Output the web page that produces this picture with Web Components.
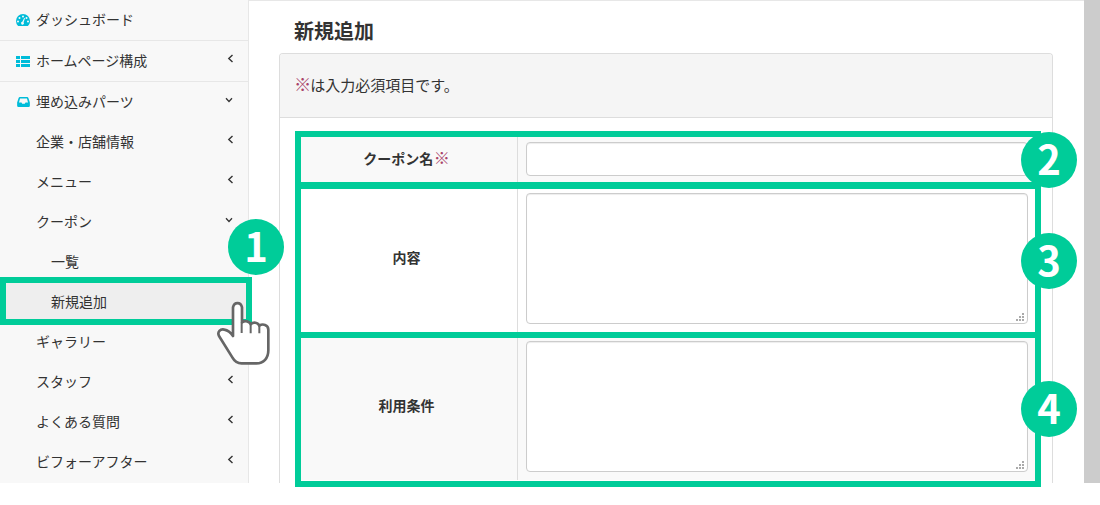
<!DOCTYPE html>
<html lang="ja">
<head>
<meta charset="utf-8">
<title>新規追加</title>
<style>
  html, body { margin: 0; background: #fff; }
  body { font: 14px "Noto Sans CJK JP", "Liberation Sans", sans-serif; color: #333; height: 505px; }
</style>
</head>
<body>
<app-page>
  <side-nav slot="side">
    <nav-item icon="gauge" line>ダッシュボード</nav-item>
    <nav-item icon="list" arrow="left" line>ホームページ構成</nav-item>
    <nav-item icon="inbox" arrow="down">埋め込みパーツ</nav-item>
    <nav-item level="1" arrow="left">企業・店舗情報</nav-item>
    <nav-item level="1" arrow="left">メニュー</nav-item>
    <nav-item level="1" arrow="down">クーポン</nav-item>
    <nav-item level="2">一覧</nav-item>
    <nav-item level="2" active>新規追加</nav-item>
    <nav-item level="1">ギャラリー</nav-item>
    <nav-item level="1" arrow="left">スタッフ</nav-item>
    <nav-item level="1" arrow="left">よくある質問</nav-item>
    <nav-item level="1" arrow="left">ビフォーアフター</nav-item>
  </side-nav>
  <form-panel heading="新規追加">
    <span slot="note"><req-mark></req-mark>は入力必須項目です。</span>
    <form-row striped>
      <span slot="label">クーポン名<req-mark tight></req-mark></span>
      <input-box></input-box>
    </form-row>
    <form-row>
      <span slot="label">内容</span>
      <area-box></area-box>
    </form-row>
    <form-row striped>
      <span slot="label">利用条件</span>
      <area-box></area-box>
    </form-row>
  </form-panel>
  <guide-layer slot="over"></guide-layer>
</app-page>

<script>
// page frame: sidebar, main column, grey scroll track
class AppPage extends HTMLElement {
  constructor(){
    super();
    this.attachShadow({mode:'open'}).innerHTML = `
      <style>
        :host{ display:flex; position:relative; height:483px; }
        .main{ flex:1; min-width:0; overflow:hidden; border-top:1px solid #e7e7e7; padding:0 31px 0 30px; box-sizing:border-box; }
        .track{ width:16px; background:#ccc; }
      </style>
      <slot name="side"></slot>
      <div class="main"><slot></slot></div>
      <div class="track"></div>
      <slot name="over"></slot>`;
  }
}

class SideNav extends HTMLElement {
  constructor(){
    super();
    this.attachShadow({mode:'open'}).innerHTML = `
      <style>
        :host{ display:block; width:249px; box-sizing:border-box; overflow:hidden; background:#f8f8f8; border-right:1px solid #e7e7e7; flex:none; }
      </style>
      <slot></slot>`;
  }
}

const navIcons = {
  gauge: `<svg width="14" height="12" viewBox="0 0 14 12"><path fill="#00bcd9" fill-rule="evenodd" d="M7 0a7 7 0 0 1 7 7c0 1.900-.7 3.600-1.900 4.700a1 1 0 0 1-.7.3H2.600a1 1 0 0 1-.7-.3A6.900 6.900 0 0 1 0 7a7 7 0 0 1 7-7zM7 1.500a1 1 0 1 0 0 2 1 1 0 0 0 0-2zM3.500 3a1 1 0 1 0 0 2 1 1 0 0 0 0-2zM10.500 3a1 1 0 1 0 0 2 1 1 0 0 0 0-2zM2 6.500a1 1 0 1 0 0 2 1 1 0 0 0 0-2zM12 6.500a1 1 0 1 0 0 2 1 1 0 0 0 0-2zM8.200 4 6.300 7.800a1.400 1.400 0 1 0 1.300.5L9 4.300z"/></svg>`,
  list: `<svg width="14" height="11" viewBox="0 0 14 11"><path fill="#00bcd9" d="M0 0h4v3H0zM5 0h9v3H5zM0 4h4v3H0zM5 4h9v3H5zM0 8h4v3H0zM5 8h9v3H5z"/></svg>`,
  inbox: `<svg width="13" height="10" viewBox="0 0 14 11" style="margin-left:1px"><path fill="#00bcd9" fill-rule="evenodd" d="M3 0h8a1.500 1.500 0 0 1 1.400 1L14 6v3.500A1.500 1.500 0 0 1 12.500 11h-11A1.500 1.500 0 0 1 0 9.500V6l1.600-5A1.500 1.500 0 0 1 3 0zM3.200 1.700 2 6h2.800l.8 1.500h2.800L9.200 6H12l-1.200-4.300z"/></svg>`
};
const navArrows = {
  left: `<svg width="7" height="9" viewBox="0 0 7 9"><path d="M5.500 1 1.800 4.500 5.500 8" fill="none" stroke="#333" stroke-width="1.400"/></svg>`,
  down: `<svg width="8" height="6" viewBox="0 0 9 7"><path d="M1 1.500 4.500 5.200 8 1.500" fill="none" stroke="#333" stroke-width="1.500"/></svg>`
};

class NavItem extends HTMLElement {
  connectedCallback(){
    if(this.shadowRoot) return;
    const level = +(this.getAttribute('level') || 0);
    const icon = navIcons[this.getAttribute('icon')] || '';
    const arrowName = this.getAttribute('arrow');
    const arrow = navArrows[arrowName] || '';
    const pad = level == 2 ? 51 : 36;
    this.attachShadow({mode:'open'}).innerHTML = `
      <style>
        :host{ display:block; height:40px; box-sizing:content-box; }
        :host([line]){ border-bottom:1px solid #e7e7e7; }
        :host([active]){ background:#eee; }
        .row{ display:flex; align-items:center; height:100%; box-sizing:border-box; padding:0 0 2px ${pad}px; position:relative; line-height:20px; color:#333; }
        .ic{ position:absolute; left:16px; top:0; bottom:0; display:flex; align-items:center; }
        .ar{ position:absolute; left:${arrowName == 'down' ? 224 : 225}px; top:0; height:35px; width:10px; display:flex; align-items:center; justify-content:center; }
      </style>
      <div class="row">
        <span class="ic">${icon}</span>
        <slot></slot>
        <span class="ar">${arrow}</span>
      </div>`;
  }
}

class FormPanel extends HTMLElement {
  connectedCallback(){
    if(this.shadowRoot) return;
    this.attachShadow({mode:'open'}).innerHTML = `
      <style>
        :host{ display:block; }
        h2{ margin:0; padding-left:15px; height:52px; font-size:20px; line-height:60px; font-weight:700; color:#333; }
        .panel{ border:1px solid #ddd; border-bottom:0; border-radius:4px 4px 0 0; height:600px; box-sizing:border-box; }
        .head{ background:#f5f5f5; border-bottom:1px solid #ddd; border-radius:3px 3px 0 0; display:flex; align-items:center; padding:0 0 5px 15px; box-sizing:border-box; height:64px; font-size:15px; }
        .body{ padding:15px; }
        .table{ border:1px solid #ddd; border-width:0 1px; }
      </style>
      <h2>${this.getAttribute('heading')}</h2>
      <div class="panel">
        <div class="head"><slot name="note"></slot></div>
        <div class="body"><div class="table"><slot></slot></div></div>
      </div>`;
  }
}

class FormRow extends HTMLElement {
  constructor(){
    super();
    this.attachShadow({mode:'open'}).innerHTML = `
      <style>
        :host{ display:grid; grid-template-columns:222px 1fr; border-top:1px solid #ddd; }
        :host([striped]){ background:#f9f9f9; }
        .label{ display:flex; align-items:center; justify-content:center; padding-bottom:4px; font-weight:700; font-size:14px; line-height:20px; white-space:nowrap; border-right:1px solid #ddd; }
        .field{ padding:8px; min-width:0; display:flex; }
      </style>
      <div class="label"><slot name="label"></slot></div>
      <div class="field"><slot></slot></div>`;
  }
}

class InputBox extends HTMLElement {
  constructor(){
    super();
    this.attachShadow({mode:'open'}).innerHTML = `
      <style>
        :host{ display:block; flex:1; min-width:0; }
        input{ display:block; width:100%; height:34px; box-sizing:border-box; border:1px solid #ccc; border-radius:4px; background:#fff; box-shadow:inset 0 1px 1px rgba(0,0,0,.075); margin:0; padding:6px 12px; }
      </style>
      <input type="text">`;
  }
}

class AreaBox extends HTMLElement {
  constructor(){
    super();
    this.attachShadow({mode:'open'}).innerHTML = `
      <style>
        :host{ display:block; flex:1; min-width:0; position:relative; }
        textarea{ display:block; width:100%; height:131px; box-sizing:border-box; border:1px solid #ccc; border-radius:4px; background:#fff; box-shadow:inset 0 1px 1px rgba(0,0,0,.075); margin:0; padding:6px 12px; resize:none; }
        svg{ position:absolute; right:4px; bottom:3px; }
      </style>
      <textarea></textarea>
      <svg width="8" height="8" viewBox="0 0 8 8"><path fill="#aaa" d="M6 0h2v2H6zM3 3h2v2H3zM6 3h2v2H6zM0 6h2v2H0zM3 6h2v2H3zM6 6h2v2H6z"/></svg>`;
  }
}

class ReqMark extends HTMLElement {
  constructor(){
    super();
    this.attachShadow({mode:'open'}).innerHTML = `
      <style>
        :host{ display:inline; color:#a9446a; font-weight:400; font-size:1.15em; margin:0 -1px; }
        :host([tight]){ margin:0 0 0 -3px; }
      </style>※`;
  }
}

// green instruction marks drawn over the screenshot
class GuideLayer extends HTMLElement {
  constructor(){
    super();
    const box = (x,y,w,h) => `<div class="box" style="left:${x}px;top:${y}px;width:${w}px;height:${h}px"></div>`;
    const num = (n,x,y) => `<div class="num" style="left:${x-28}px;top:${y-28}px">${n}</div>`;
    this.attachShadow({mode:'open'}).innerHTML = `
      <style>
        :host{ position:absolute; left:0; top:0; width:1100px; height:505px; display:block; pointer-events:none; }
        .box{ position:absolute; box-sizing:border-box; border:6px solid #00cc99; }
        .num{ position:absolute; width:56px; height:56px; border-radius:50%; background:#00cc99; color:#fff;
              font:700 40px/53px "Noto Sans CJK JP",sans-serif; text-align:center; }
        svg{ position:absolute; left:200px; top:280px; }
      </style>
      ${box(0,277,252,48)}
      ${box(295,131,746,58)}
      ${box(295,182,746,156)}
      ${box(295,332,746,155)}
      ${num(1,256,247)}
      ${num(2,1049,160)}
      ${num(3,1049,261)}
      ${num(4,1049,409)}
      <svg width="90" height="100" viewBox="0 0 270 300">
        <path d="M99 168V82a14 17 0 0 1 27 0v45c10-6 22-4 26 6 8-8 22-6 26 4 10-7 27-3 27 12v62c0 24-14 39-36 39h-44c-14 0-22-7-28-18L57 168c-6-12 4-22 16-19 12 2 20 10 26 19z" fill="#fff" stroke="#666" stroke-width="8" stroke-linejoin="round"/>
        <path d="M125 127v32M152 133v27M178 137v23" fill="none" stroke="#666" stroke-width="6"/>
      </svg>`;
  }
}

window.customElements.define('app-page', AppPage);
window.customElements.define('side-nav', SideNav);
window.customElements.define('nav-item', NavItem);
window.customElements.define('form-panel', FormPanel);
window.customElements.define('form-row', FormRow);
window.customElements.define('input-box', InputBox);
window.customElements.define('area-box', AreaBox);
window.customElements.define('req-mark', ReqMark);
window.customElements.define('guide-layer', GuideLayer);
</script>
</body>
</html>
